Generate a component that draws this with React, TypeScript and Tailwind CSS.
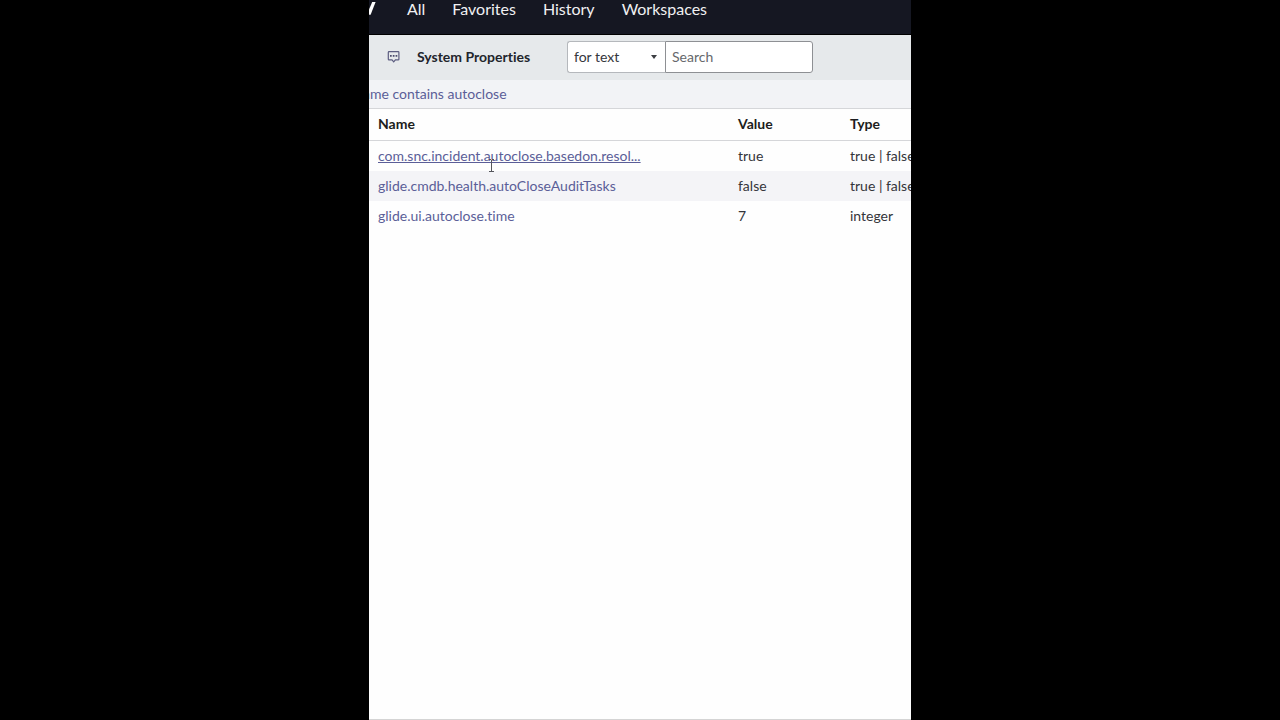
const navItems = ["All", "Favorites", "History", "Workspaces"];

const rows = [
  { name: "com.snc.incident.autoclose.basedon.resol...", value: "true", type: "true | false", hovered: true },
  { name: "glide.cmdb.health.autoCloseAuditTasks", value: "false", type: "true | false", hovered: false },
  { name: "glide.ui.autoclose.time", value: "7", type: "integer", hovered: false },
];

function TopNav() {
  return (
    <header className="flex h-[35px] items-start overflow-hidden border-b border-black bg-[#151722]">
      <svg className="h-[18px] w-[38px] shrink-0" viewBox="0 0 38 18" fill="none" aria-hidden="true">
        <path d="M0 9.5L3.2 2H6.6L1.6 14.8H0Z" fill="#fff" />
      </svg>
      <nav className="flex gap-[27px] text-base leading-[18px] text-[#f0f0f2]">
        {navItems.map((item) => (
          <a key={item} href="#">
            {item}
          </a>
        ))}
      </nav>
    </header>
  );
}

function Toolbar() {
  return (
    <div className="flex h-[45px] items-center bg-[#e6e9eb] pb-0.5 pl-[18px]">
      <button type="button" aria-label="Activity" className="shrink-0">
        <svg className="h-3.5 w-3.5" viewBox="0 0 14 14" fill="none" aria-hidden="true">
          <path
            d="M2 1.7H11.2Q11.9 1.7 11.9 2.4V9.2Q11.9 9.9 11.2 9.9H8.4L6.7 11.9L5 9.9H2Q1.3 9.9 1.3 9.2V2.4Q1.3 1.7 2 1.7Z"
            stroke="#5c5d80"
            strokeWidth="1.2"
          />
          <path d="M3 5h1.7v1.7H3zM5.8 5h1.7v1.7H5.8zM8.6 5h1.7v1.7H8.6z" fill="#4b4c6c" />
        </svg>
      </button>
      <h1 className="ml-4 w-[150px] shrink-0 text-sm font-bold text-[#22252c]">System Properties</h1>
      <div className="relative w-[98px] shrink-0">
        <select
          aria-label="Search field"
          className="h-8 w-full appearance-none rounded-l-[3px] border border-r-0 border-[#b5b8bc] bg-white pl-1.5 text-sm text-[#35373c]"
        >
          <option>for text</option>
        </select>
        <svg className="pointer-events-none absolute top-3.5 right-2 h-1 w-1.5" viewBox="0 0 6 4" aria-hidden="true">
          <path d="M0 0H6L3 4Z" fill="#3c3e42" />
        </svg>
      </div>
      <input
        type="text"
        aria-label="Search"
        placeholder="Search"
        className="h-8 w-[148px] min-w-0 rounded-r-[3px] border border-[#8e9094] bg-white px-1.5 text-sm text-[#35373c] placeholder:text-[#66686c]"
      />
    </div>
  );
}

function PropertiesTable() {
  return (
    <div className="relative overflow-hidden">
      <table className="w-full table-fixed text-left text-sm whitespace-nowrap">
        <colgroup>
          <col className="w-[360px]" />
          <col className="w-[112px]" />
          <col />
        </colgroup>
        <thead>
          <tr className="h-[31px] border-b border-[#d5d6d9] text-[#1c1d20]">
            <th className="pl-[9px] font-bold">Name</th>
            <th className="pl-[9px] font-bold">Value</th>
            <th className="pl-[9px] font-bold">Type</th>
          </tr>
        </thead>
        <tbody className="text-[#34353a]">
          {rows.map((row) => (
            <tr key={row.name} className="h-[30px] first:h-[31px] even:bg-[#f4f4f7]">
              <td className="pl-[9px]">
                <a href="#" className={row.hovered ? "text-[#5b5e98] underline" : "text-[#5b5e98]"}>
                  {row.name}
                </a>
              </td>
              <td className="pl-[9px]">{row.value}</td>
              <td className="pl-[9px]">{row.type}</td>
            </tr>
          ))}
        </tbody>
      </table>
      <svg
        className="pointer-events-none absolute top-[50px] left-[119px] h-[13px] w-[7px]"
        viewBox="0 0 7 13"
        fill="none"
        aria-hidden="true"
      >
        <path d="M1 .5H3M4 .5H6M3.5 1V12M1 12.5H6" stroke="#55565c" />
      </svg>
    </div>
  );
}

export default function App() {
  return (
    <div className="min-h-screen bg-black font-['Lato',sans-serif] [font-variant-ligatures:none]">
      <main className="mx-auto flex min-h-screen max-w-[542px] flex-col overflow-hidden border-b border-[#d4d4d4] bg-[#fefefe]">
        <TopNav />
        <Toolbar />
        <div className="h-[29px] overflow-hidden border-b border-[#d5d6d9] bg-[#f2f3f6]">
          <a href="#" className="-ml-1.5 block text-sm leading-7 text-[#5b5e98]">
            ame contains autoclose
          </a>
        </div>
        <PropertiesTable />
      </main>
    </div>
  );
}
